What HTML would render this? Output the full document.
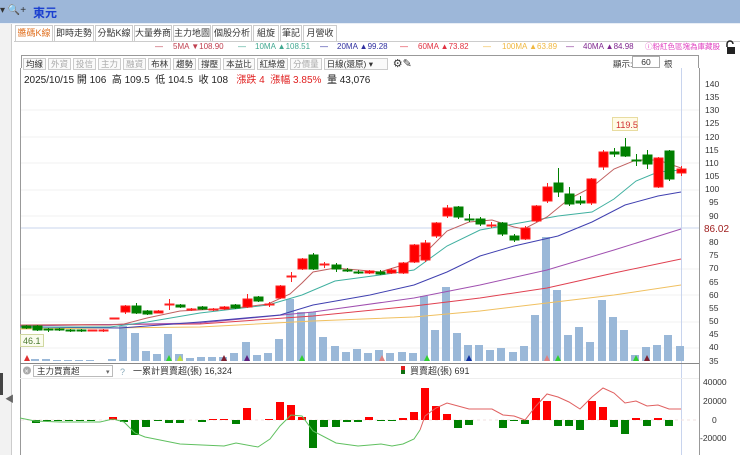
<!DOCTYPE html>
<html><head><meta charset="utf-8"><style>
*{margin:0;padding:0;box-sizing:border-box}
body{width:740px;height:455px;overflow:hidden;background:#fff;font-family:"Liberation Sans","Noto Sans CJK TC",sans-serif;position:relative;font-size:10px;color:#333}
.a{position:absolute;white-space:nowrap}
.tab{position:absolute;top:25px;height:16px;border:1px solid #ccc;border-bottom:none;font-size:9px;line-height:15px;text-align:center;background:#fff;color:#333}
.tb{display:inline-block;border:1px solid #ccc;padding:0 2px;height:12px;line-height:11px;font-size:8.5px;margin-right:2px;background:#fafafa}
.lg{position:absolute;top:42px;font-size:8px;line-height:10px;white-space:nowrap}
</style></head><body>
<div class="a" style="left:0;top:0;width:740px;height:23px;background:#9db7d9"></div>
<div class="a" style="left:0;top:5px;font-size:10px;color:#333">▾ <span style="color:#557">🔍</span>+</div>
<div class="a" style="left:33px;top:4px;font-size:12px;font-weight:bold;color:#1a3fd0">東元</div>
<div class="a" style="left:0;top:23px;width:740px;height:1px;background:#e8eef6"></div>
<div class="a" style="left:0;top:24px;width:12px;height:431px;background:#f2f2f2;border-right:1px solid #ccc"></div>
<div class="a" style="left:0;top:373px;width:3px;height:22px;background:#444"></div>
<div class="a" style="left:5px;top:392px;font-size:9px;color:#666">◀</div>
<div class="tab" style="left:15px;width:38px;color:#e07020">醬碼K線</div>
<div class="tab" style="left:54px;width:40px">即時走勢</div>
<div class="tab" style="left:95px;width:38px">分點K線</div>
<div class="tab" style="left:134px;width:38px">大量券商</div>
<div class="tab" style="left:173px;width:38px">主力地圖</div>
<div class="tab" style="left:212px;width:40px">個股分析</div>
<div class="tab" style="left:253px;width:26px">組旋</div>
<div class="tab" style="left:280px;width:22px">筆記</div>
<div class="tab" style="left:303px;width:34px">月營收</div>
<div class="a" style="left:14px;top:41px;width:726px;height:1px;background:#ccc"></div>
<div class="lg" style="left:155px;color:#c04050">—</div><div class="lg" style="left:173px;color:#c04050">5MA ▼108.90</div>
<div class="lg" style="left:238px;color:#40a890">—</div><div class="lg" style="left:255px;color:#40a890">10MA ▲108.51</div>
<div class="lg" style="left:320px;color:#3030a0">—</div><div class="lg" style="left:337px;color:#3030a0">20MA ▲99.28</div>
<div class="lg" style="left:400px;color:#e03040">—</div><div class="lg" style="left:418px;color:#e03040">60MA ▲73.82</div>
<div class="lg" style="left:483px;color:#f0b840">—</div><div class="lg" style="left:502px;color:#f0b840">100MA ▲63.89</div>
<div class="lg" style="left:566px;color:#802890">—</div><div class="lg" style="left:583px;color:#802890">40MA ▲84.98</div>
<div class="lg" style="left:645px;color:#e040c0;font-size:7.5px">ⓘ粉紅色區塊為庫藏股</div>
<svg class="a" style="left:724px;top:40px" width="14" height="16"><path d="M3 7 V4 a3 3 0 0 1 6 0" fill="none" stroke="#222" stroke-width="1.5"/><rect x="3" y="7" width="8" height="7" fill="#222"/></svg>
<div class="a" style="left:21px;top:55px;width:678px;height:13px;border:1px solid #999;border-bottom:none"></div>
<div class="a" style="left:23px;top:57px">
<span class="tb">均線</span><span class="tb" style="color:#aaa">外資</span><span class="tb" style="color:#aaa">投信</span><span class="tb" style="color:#aaa">主力</span><span class="tb" style="color:#aaa">融資</span><span class="tb">布林</span><span class="tb">趨勢</span><span class="tb">撐壓</span><span class="tb">本益比</span><span class="tb">紅綠燈</span><span class="tb" style="color:#aaa">分價量</span><span class="tb" style="width:64px">日線(還原) ▾</span><span style="font-size:11px"> ⚙✎</span></div>
<div class="a" style="left:613px;top:58px;font-size:8.5px">顯示:</div>
<div class="a" style="left:632px;top:56px;width:28px;height:12px;border:1px solid #aaa;font-size:8.5px;text-align:center;line-height:10px">60</div>
<div class="a" style="left:664px;top:58px;font-size:8.5px">根</div>
<div class="a" style="left:24px;top:71px;font-size:10px;color:#222">2025/10/15 開 106 &nbsp;高 109.5 &nbsp;低 104.5 &nbsp;收 108 &nbsp;&nbsp;<span style="color:#e02020">漲跌 4 &nbsp;漲幅 3.85%</span> &nbsp;量 43,076</div>
<svg class="a" style="left:0;top:0" width="740" height="455" xmlns="http://www.w3.org/2000/svg">
<line x1="20.5" y1="68" x2="20.5" y2="455" stroke="#999"/>
<line x1="699.5" y1="68" x2="699.5" y2="455" stroke="#999"/>
<g stroke="#f0f0f0"><line x1="21" y1="110" x2="699" y2="110"/><line x1="21" y1="137" x2="699" y2="137"/><line x1="21" y1="163" x2="699" y2="163"/><line x1="21" y1="190" x2="699" y2="190"/><line x1="21" y1="216" x2="699" y2="216"/><line x1="21" y1="269" x2="699" y2="269"/><line x1="21" y1="295" x2="699" y2="295"/><line x1="21" y1="322" x2="699" y2="322"/><line x1="21" y1="348" x2="699" y2="348"/></g>
<line x1="21" y1="228" x2="699" y2="228" stroke="#c8d4ee"/>
<line x1="681.5" y1="68" x2="681.5" y2="455" stroke="#c8d4ee"/>
<g font-size="8.5" fill="#333">
<text x="705" y="87">140</text><text x="705" y="100">135</text><text x="705" y="113">130</text><text x="705" y="126">125</text><text x="705" y="140">120</text><text x="705" y="153">115</text><text x="705" y="166">110</text><text x="705" y="179">105</text><text x="705" y="192">100</text><text x="709" y="205">95</text><text x="709" y="219">90</text><text x="709" y="245">80</text><text x="709" y="258">75</text><text x="709" y="271">70</text><text x="709" y="285">65</text><text x="709" y="298">60</text><text x="709" y="311">55</text><text x="709" y="324">50</text><text x="709" y="337">45</text><text x="709" y="350">40</text><text x="709" y="364">35</text>
<text x="703" y="385">40000</text><text x="703" y="404">20000</text><text x="712" y="423">0</text><text x="700" y="441">-20000</text></g>
<text x="704" y="232" font-size="10" fill="#a02020">86.02</text>
<g fill="#9ab8d8">
<rect x="31" y="359" width="8" height="2"/><rect x="42" y="359" width="8" height="2"/><rect x="53" y="360" width="8" height="1"/><rect x="64" y="360" width="8" height="1"/><rect x="75" y="360" width="8" height="1"/><rect x="86" y="360" width="8" height="1"/><rect x="108" y="359" width="8" height="2"/>
<rect x="119" y="326" width="8" height="35"/><rect x="131" y="333" width="8" height="28"/><rect x="142" y="351" width="8" height="10"/><rect x="153" y="354" width="8" height="7"/><rect x="164" y="334" width="8" height="27"/><rect x="175" y="354" width="8" height="7"/><rect x="186" y="358" width="8" height="3"/><rect x="197" y="357" width="8" height="4"/><rect x="208" y="357" width="8" height="4"/><rect x="219" y="357" width="8" height="4"/><rect x="230" y="353" width="8" height="8"/><rect x="242" y="342" width="8" height="19"/><rect x="253" y="355" width="8" height="6"/><rect x="264" y="353" width="8" height="8"/><rect x="275" y="339" width="8" height="22"/><rect x="286" y="299" width="8" height="62"/><rect x="297" y="312" width="8" height="49"/><rect x="308" y="312" width="8" height="49"/><rect x="319" y="337" width="8" height="24"/><rect x="331" y="346" width="8" height="15"/><rect x="342" y="352" width="8" height="9"/><rect x="353" y="349" width="8" height="12"/><rect x="364" y="353" width="8" height="8"/><rect x="375" y="350" width="8" height="11"/><rect x="386" y="353" width="8" height="8"/><rect x="398" y="352" width="8" height="9"/><rect x="409" y="353" width="8" height="8"/><rect x="420" y="296" width="8" height="65"/><rect x="431" y="330" width="8" height="31"/><rect x="442" y="287" width="8" height="74"/><rect x="453" y="333" width="8" height="28"/><rect x="464" y="345" width="8" height="16"/><rect x="475" y="345" width="8" height="16"/><rect x="486" y="350" width="8" height="11"/><rect x="497" y="348" width="8" height="13"/><rect x="509" y="352" width="8" height="9"/><rect x="520" y="346" width="8" height="15"/><rect x="531" y="315" width="8" height="46"/><rect x="542" y="237" width="8" height="124"/><rect x="553" y="290" width="8" height="71"/><rect x="564" y="335" width="8" height="26"/><rect x="575" y="327" width="8" height="34"/><rect x="586" y="342" width="8" height="19"/><rect x="598" y="300" width="8" height="61"/><rect x="609" y="317" width="8" height="44"/><rect x="620" y="330" width="8" height="31"/><rect x="631" y="355" width="8" height="6"/><rect x="642" y="347" width="8" height="14"/><rect x="653" y="345" width="8" height="16"/><rect x="664" y="335" width="8" height="26"/><rect x="676" y="346" width="8" height="15"/></g>
<g><polygon points="24,361 27,355 30,361" fill="#e03030"/><polygon points="166,361 169,355 172,361" fill="#30d030"/><polygon points="177,361 180,355 183,361" fill="#c0e040"/><polygon points="221,361 224,355 227,361" fill="#802030"/><polygon points="244,361 247,355 250,361" fill="#602080"/><polygon points="299,361 302,355 305,361" fill="#30d030"/><polygon points="379,361 382,355 385,361" fill="#e08080"/><polygon points="424,361 427,355 430,361" fill="#30d030"/><polygon points="466,361 469,355 472,361" fill="#1030a0"/><polygon points="544,361 547,355 550,361" fill="#e08080"/><polygon points="555,361 558,355 561,361" fill="#30d030"/><polygon points="633,361 636,355 639,361" fill="#30d030"/><polygon points="644,361 647,355 650,361" fill="#802030"/></g>
<g fill="none" stroke-width="1">
<polyline stroke="#f0c060" points="20,329 200,327 313,321 414,317 480,311 547,303 614,295 681,285"/>
<polyline stroke="#e04050" points="20,325 200,324 313,316 414,306 480,298 547,288 614,273 681,259"/>
<polyline stroke="#a050b0" points="20,326 200,323 313,312 414,298 480,285 547,270 614,250 681,229"/>
<polyline stroke="#4040b0" points="20,327 120,328 200,322 280,315 313,305 370,295 414,285 447,272 480,256 514,246 558,236 592,222 625,205 658,196 681,192"/>
<polyline stroke="#40b0a0" points="20,327 110,327 147,322 200,313 268,305 302,295 335,281 380,275 414,270 447,246 480,230 525,222 558,216 592,212 614,199 636,181 658,172 681,170"/>
<polyline stroke="#c06060" points="20,325 110,325 124,324 147,318 180,311 235,308 268,304 290,294 302,283 313,272 335,268 358,270 380,272 403,265 425,253 447,231 469,222 492,220 514,227 524,229 547,217 569,199 592,187 614,169 636,160 658,160 681,168"/>
</g>
<g stroke-width="1">
<g stroke="#007f00" fill="#007f00">
<line x1="26.5" y1="325" x2="26.5" y2="329"/><rect x="22" y="326" width="9" height="2"/>
<line x1="37.5" y1="325" x2="37.5" y2="331"/><rect x="33" y="326" width="9" height="4"/>
<line x1="48.5" y1="328" x2="48.5" y2="332"/><rect x="44" y="329" width="9" height="1"/>
<line x1="59.5" y1="328" x2="59.5" y2="331"/><rect x="55" y="329" width="9" height="1"/>
<line x1="70.5" y1="329" x2="70.5" y2="332"/><rect x="66" y="330" width="9" height="1"/>
<line x1="81.5" y1="329" x2="81.5" y2="332"/><rect x="77" y="330" width="9" height="1"/>
<line x1="136.5" y1="303" x2="136.5" y2="314"/><rect x="132" y="306" width="9" height="7"/>
<line x1="147.5" y1="310" x2="147.5" y2="315"/><rect x="143" y="311" width="9" height="3"/>
<line x1="180.5" y1="304" x2="180.5" y2="308"/><rect x="176" y="305" width="9" height="2"/>
<line x1="202.5" y1="306" x2="202.5" y2="310"/><rect x="198" y="307" width="9" height="2"/>
<line x1="235.5" y1="304" x2="235.5" y2="309"/><rect x="231" y="305" width="9" height="3"/>
<line x1="258.5" y1="296" x2="258.5" y2="302"/><rect x="254" y="297" width="9" height="4"/>
<line x1="313.5" y1="253" x2="313.5" y2="270"/><rect x="309" y="255" width="9" height="14"/>
<line x1="336.5" y1="263" x2="336.5" y2="272"/><rect x="332" y="265" width="9" height="4"/>
<line x1="347.5" y1="268" x2="347.5" y2="272"/><rect x="343" y="270" width="9" height="1"/>
<line x1="358.5" y1="270" x2="358.5" y2="274"/><rect x="354" y="272" width="9" height="1"/>
<line x1="380.5" y1="270" x2="380.5" y2="275"/><rect x="376" y="272" width="9" height="2"/>
<line x1="458.5" y1="206" x2="458.5" y2="219"/><rect x="454" y="207" width="9" height="10"/>
<line x1="469.5" y1="214" x2="469.5" y2="222"/><rect x="465" y="219" width="9" height="1"/>
<line x1="480.5" y1="217" x2="480.5" y2="226"/><rect x="476" y="219" width="9" height="5"/>
<line x1="502.5" y1="222" x2="502.5" y2="236"/><rect x="498" y="223" width="9" height="11"/>
<line x1="514.5" y1="234" x2="514.5" y2="242"/><rect x="510" y="236" width="9" height="4"/>
<line x1="558.5" y1="168" x2="558.5" y2="197"/><rect x="554" y="183" width="9" height="9"/>
<line x1="569.5" y1="187" x2="569.5" y2="206"/><rect x="565" y="194" width="9" height="10"/>
<line x1="580.5" y1="196" x2="580.5" y2="205"/><rect x="576" y="201" width="9" height="2"/>
<line x1="614.5" y1="148" x2="614.5" y2="157"/><rect x="610" y="152" width="9" height="2"/>
<line x1="625.5" y1="138" x2="625.5" y2="157"/><rect x="621" y="147" width="9" height="9"/>
<line x1="636.5" y1="154" x2="636.5" y2="166"/><rect x="632" y="160" width="9" height="1"/>
<line x1="647.5" y1="150" x2="647.5" y2="169"/><rect x="643" y="155" width="9" height="9"/>
<line x1="669.5" y1="150" x2="669.5" y2="181"/><rect x="665" y="151" width="9" height="28"/>
</g>
<g stroke="#ff2020" fill="#ff0000">
<line x1="92.5" y1="330" x2="92.5" y2="331"/><rect x="88" y="330" width="9" height="1"/>
<line x1="103.5" y1="329" x2="103.5" y2="332"/><rect x="99" y="330" width="9" height="1"/>
<rect x="110" y="318" width="9" height="1"/>
<line x1="125.5" y1="305" x2="125.5" y2="314"/><rect x="121" y="306" width="9" height="6"/>
<line x1="158.5" y1="310" x2="158.5" y2="313"/><rect x="154" y="311" width="9" height="2"/>
<line x1="169.5" y1="299" x2="169.5" y2="310"/><rect x="165" y="304" width="9" height="1"/>
<line x1="191.5" y1="308" x2="191.5" y2="311"/><rect x="187" y="309" width="9" height="1"/>
<line x1="213.5" y1="308" x2="213.5" y2="311"/><rect x="209" y="309" width="9" height="1"/>
<line x1="224.5" y1="306" x2="224.5" y2="310"/><rect x="220" y="307" width="9" height="2"/>
<line x1="247.5" y1="294" x2="247.5" y2="308"/><rect x="243" y="299" width="9" height="8"/>
<line x1="269.5" y1="302" x2="269.5" y2="307"/><rect x="265" y="304" width="9" height="1"/>
<line x1="280.5" y1="285" x2="280.5" y2="299"/><rect x="276" y="286" width="9" height="12"/>
<line x1="291.5" y1="272" x2="291.5" y2="282"/><rect x="287" y="276" width="9" height="1"/>
<line x1="302.5" y1="258" x2="302.5" y2="270"/><rect x="298" y="259" width="9" height="10"/>
<line x1="324.5" y1="262" x2="324.5" y2="268"/><rect x="320" y="264" width="9" height="1"/>
<line x1="369.5" y1="270" x2="369.5" y2="274"/><rect x="365" y="271" width="9" height="2"/>
<line x1="391.5" y1="268" x2="391.5" y2="274"/><rect x="387" y="270" width="9" height="3"/>
<line x1="403.5" y1="262" x2="403.5" y2="274"/><rect x="399" y="263" width="9" height="10"/>
<line x1="414.5" y1="244" x2="414.5" y2="263"/><rect x="410" y="245" width="9" height="17"/>
<line x1="425.5" y1="240" x2="425.5" y2="262"/><rect x="421" y="243" width="9" height="17"/>
<line x1="436.5" y1="222" x2="436.5" y2="238"/><rect x="432" y="223" width="9" height="13"/>
<line x1="447.5" y1="205" x2="447.5" y2="218"/><rect x="443" y="208" width="9" height="8"/>
<line x1="491.5" y1="222" x2="491.5" y2="228"/><rect x="487" y="225" width="9" height="1"/>
<line x1="525.5" y1="226" x2="525.5" y2="240"/><rect x="521" y="228" width="9" height="11"/>
<line x1="536.5" y1="205" x2="536.5" y2="222"/><rect x="532" y="206" width="9" height="15"/>
<line x1="547.5" y1="183" x2="547.5" y2="203"/><rect x="543" y="187" width="9" height="14"/>
<line x1="591.5" y1="178" x2="591.5" y2="205"/><rect x="587" y="179" width="9" height="24"/>
<line x1="603.5" y1="150" x2="603.5" y2="170"/><rect x="599" y="152" width="9" height="15"/>
<line x1="658.5" y1="157" x2="658.5" y2="188"/><rect x="654" y="158" width="9" height="29"/>
<line x1="681.5" y1="166" x2="681.5" y2="176"/><rect x="677" y="169" width="9" height="4"/>
</g></g>
<rect x="612.5" y="117.5" width="25" height="13" fill="#fffbe6" stroke="#e8dca0"/>
<text x="616" y="128" font-size="9" fill="#d03030">119.5</text>
<rect x="20.5" y="334.5" width="23" height="12" fill="#fafcee" stroke="#d0d8a0"/>
<text x="23" y="344" font-size="9" fill="#4a7a30">46.1</text>
<line x1="20" y1="363.5" x2="699" y2="363.5" stroke="#888"/>
<line x1="20" y1="378.5" x2="699" y2="378.5" stroke="#eee"/>
<circle cx="27" cy="370.5" r="4" fill="#aaa"/><text x="24.5" y="373.5" font-size="7" fill="#fff">×</text>
<rect x="33.5" y="365.5" width="79" height="11" fill="#fff" stroke="#bbb"/>
<text x="37" y="374" font-size="8.5" fill="#333">主力買賣超</text><text x="106" y="374" font-size="7" fill="#666">▾</text>
<text x="120" y="375" font-size="9" fill="#8ab">?</text>
<text x="133" y="374" font-size="9" fill="#333">一累計買賣超(張) 16,324</text>
<rect x="401" y="366" width="4" height="4" fill="#e02020"/><rect x="401" y="370" width="4" height="4" fill="#107010"/>
<text x="410" y="374" font-size="9" fill="#333">買賣超(張) 691</text>
<line x1="21" y1="420" x2="699" y2="420" stroke="#f0e0e0" stroke-dasharray="3,3"/>
<g fill="#008000">
<rect x="32" y="420" width="8" height="3"/><rect x="43" y="420" width="8" height="1"/><rect x="54" y="420" width="8" height="1"/><rect x="65" y="420" width="8" height="1"/><rect x="76" y="420" width="8" height="1"/><rect x="87" y="420" width="8" height="1"/><rect x="120" y="420" width="8" height="2"/><rect x="131" y="420" width="8" height="15"/><rect x="142" y="420" width="8" height="7"/><rect x="154" y="420" width="8" height="1"/><rect x="165" y="420" width="8" height="3"/><rect x="176" y="420" width="8" height="3"/><rect x="198" y="420" width="8" height="2"/><rect x="232" y="420" width="8" height="4"/><rect x="309" y="420" width="8" height="28"/><rect x="320" y="420" width="8" height="7"/><rect x="332" y="420" width="8" height="7"/><rect x="343" y="420" width="8" height="2"/><rect x="354" y="420" width="8" height="2"/><rect x="377" y="420" width="8" height="1"/><rect x="388" y="420" width="8" height="1"/><rect x="454" y="420" width="8" height="8"/><rect x="465" y="420" width="8" height="5"/><rect x="499" y="420" width="8" height="8"/><rect x="510" y="420" width="8" height="1"/><rect x="521" y="420" width="8" height="4"/><rect x="554" y="420" width="8" height="6"/><rect x="565" y="420" width="8" height="6"/><rect x="576" y="420" width="8" height="10"/><rect x="610" y="420" width="8" height="7"/><rect x="621" y="420" width="8" height="14"/><rect x="643" y="420" width="8" height="6"/><rect x="665" y="420" width="8" height="6"/></g>
<g fill="#ff0000">
<rect x="109" y="417" width="8" height="3"/><rect x="209" y="419" width="8" height="1"/><rect x="220" y="419" width="8" height="1"/><rect x="243" y="408" width="8" height="12"/><rect x="265" y="419" width="8" height="1"/><rect x="276" y="402" width="8" height="18"/><rect x="287" y="405" width="8" height="15"/><rect x="298" y="417" width="8" height="3"/><rect x="365" y="417" width="8" height="3"/><rect x="399" y="418" width="8" height="2"/><rect x="410" y="412" width="8" height="8"/><rect x="421" y="388" width="8" height="32"/><rect x="432" y="406" width="8" height="14"/><rect x="443" y="414" width="8" height="6"/><rect x="532" y="398" width="8" height="22"/><rect x="543" y="401" width="8" height="19"/><rect x="588" y="401" width="8" height="19"/><rect x="599" y="407" width="8" height="13"/><rect x="632" y="418" width="8" height="2"/><rect x="654" y="418" width="8" height="2"/></g>
<polyline fill="none" stroke="#60c060" points="20,418 35,421 60,422 100,422 113,419 124,422 135,433 145,437 180,444 224,446 236,443 258,447 270,439 280,426 291,415 302,416 313,431 336,443 358,446 370,445 381,444 392,446 403,444 414,439 420,430"/>
<polyline fill="none" stroke="#e06060" points="420,430 425,416 436,408 447,403 458,406 469,409 492,409 503,415 514,416 525,420 536,406 547,394 558,397 569,402 580,409 592,397 603,388 614,393 625,403 636,401 647,406 658,405 669,409 681,409"/>
</svg>
</body></html>
